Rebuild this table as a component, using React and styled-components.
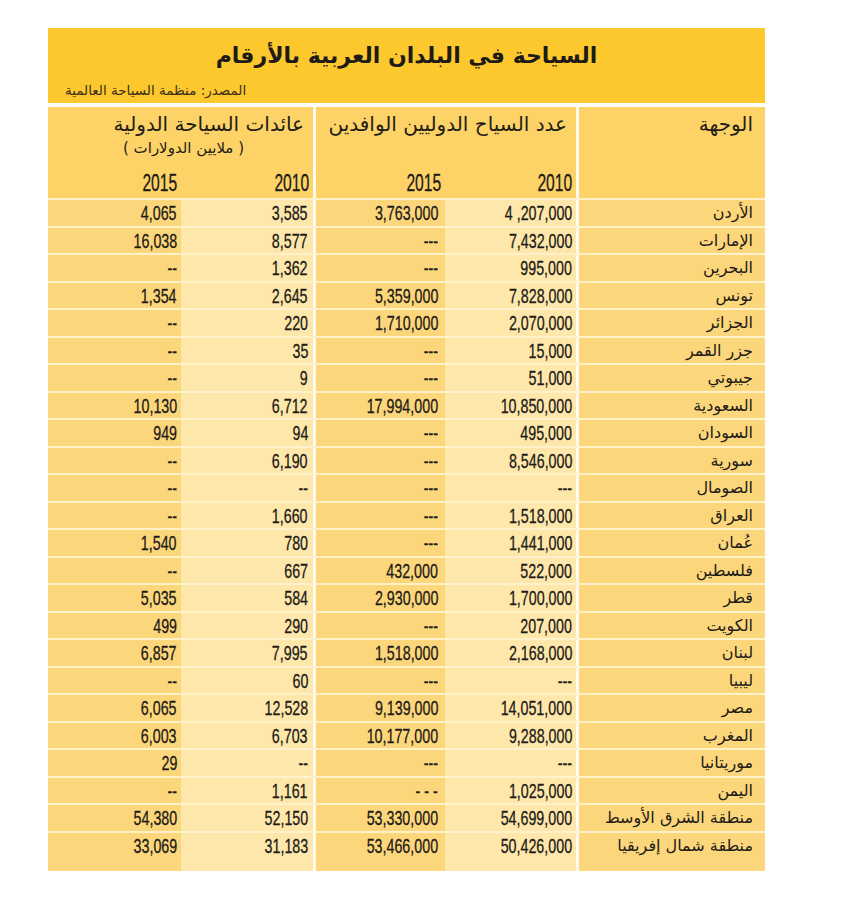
import React from "react";
import styled, { createGlobalStyle } from "styled-components";

const Global = createGlobalStyle`
  html, body { margin: 0; padding: 0; background: #ffffff; }
  * { box-sizing: border-box; }
`;

const Page = styled.div`
  padding: 28px 0 0 48px;
  width: 841px;
  height: 897px;
  background: #ffffff;
`;

const Sheet = styled.div`
  width: 717px;
  display: flex;
  flex-direction: column;
  gap: 4px;
`;

const Banner = styled.header`
  background: #fcc82d;
  height: 75px;
  direction: rtl;
  display: flex;
  flex-direction: column;
  padding: 15px 17px 0 17px;
`;

const Title = styled.h1`
  margin: 0;
  font-family: "DejaVu Sans", sans-serif;
  font-weight: bold;
  font-size: 22px;
  line-height: 26px;
  color: #1d1a17;
  text-align: center;
`;

const Source = styled.div`
  margin-top: 12px;
  font-family: "DejaVu Sans", sans-serif;
  font-size: 13.5px;
  line-height: 18px;
  color: #3a2e1c;
  text-align: left;
`;

const Table = styled.div`
  direction: rtl;
  display: grid;
  grid-template-columns: 189px 131px 132px 132px 133px;
  row-gap: 2px;
  background: #fff1c9;
`;

const HeadCell = styled.div`
  grid-column: span ${(p) => p.$span || 1};
  background: #fdd367;
  height: 91px;
  border-left: ${(p) => (p.$sep ? "3px solid #fffaf0" : "0")};
  display: flex;
  flex-direction: column;
  padding-top: 4px;
`;

const HeadTitle = styled.div`
  font-family: "DejaVu Sans", sans-serif;
  font-size: 20px;
  line-height: 26px;
  color: #231d15;
  white-space: nowrap;
  padding: 0 ${(p) => p.$pad || 9}px;
  text-align: right;
`;

const HeadSub = styled.div`
  font-family: "DejaVu Sans", sans-serif;
  font-size: 15px;
  line-height: 22px;
  height: 22px;
  color: #231d15;
  text-align: center;
  white-space: nowrap;
  padding-left: 6px;
`;

const Years = styled.div`
  margin-top: auto;
  display: grid;
  grid-template-columns: ${(p) => p.$cols};
  height: 28px;
`;

const Year = styled.div`
  font-family: "Liberation Sans", sans-serif;
  font-size: 23px;
  line-height: 26px;
  color: #1d1a17;
  -webkit-text-stroke: 0.3px #1d1a17;
  direction: ltr;
  text-align: right;
  padding-right: 4px;
`;

const Narrow = styled.span`
  display: inline-block;
  transform: scaleX(0.68);
  transform-origin: right center;
`;

const Cell = styled.div`
  background: ${(p) => (p.$tone === "light" ? "#fee7ab" : "#fcd67b")};
  height: ${(p) => (p.$last ? "38.5px" : "25.5px")};
  line-height: 25.5px;
  border-left: ${(p) => (p.$sep ? "3px solid #fffaf0" : "0")};
  color: #1d1a17;
  text-align: right;
  white-space: nowrap;
`;

const NameCell = styled(Cell)`
  font-family: "DejaVu Sans", sans-serif;
  font-size: 16px;
  padding-right: 12px;
  direction: rtl;
`;

const NumCell = styled(Cell)`
  font-family: "Liberation Sans", sans-serif;
  font-size: 21px;
  -webkit-text-stroke: 0.3px #1d1a17;
  direction: ltr;
  padding-right: ${(p) => p.$pr || 5}px;
`;

const rows = [
  ["الأردن", "4 ,207,000", "3,763,000", "3,585", "4,065"],
  ["الإمارات", "7,432,000", "---", "8,577", "16,038"],
  ["البحرين", "995,000", "---", "1,362", "--"],
  ["تونس", "7,828,000", "5,359,000", "2,645", "1,354"],
  ["الجزائر", "2,070,000", "1,710,000", "220", "--"],
  ["جزر القمر", "15,000", "---", "35", "--"],
  ["جيبوتي", "51,000", "---", "9", "--"],
  ["السعودية", "10,850,000", "17,994,000", "6,712", "10,130"],
  ["السودان", "495,000", "---", "94", "949"],
  ["سورية", "8,546,000", "---", "6,190", "--"],
  ["الصومال", "---", "---", "--", "--"],
  ["العراق", "1,518,000", "---", "1,660", "--"],
  ["عُمان", "1,441,000", "---", "780", "1,540"],
  ["فلسطين", "522,000", "432,000", "667", "--"],
  ["قطر", "1,700,000", "2,930,000", "584", "5,035"],
  ["الكويت", "207,000", "---", "290", "499"],
  ["لبنان", "2,168,000", "1,518,000", "7,995", "6,857"],
  ["ليبيا", "---", "---", "60", "--"],
  ["مصر", "14,051,000", "9,139,000", "12,528", "6,065"],
  ["المغرب", "9,288,000", "10,177,000", "6,703", "6,003"],
  ["موريتانيا", "---", "---", "--", "29"],
  ["اليمن", "1,025,000", "- - -", "1,161", "--"],
  ["منطقة الشرق الأوسط", "54,699,000", "53,330,000", "52,150", "54,380"],
  ["منطقة شمال إفريقيا", "50,426,000", "53,466,000", "31,183", "33,069"],
];

export default function App() {
  return (
    <Page>
      <Global />
      <Sheet>
        <Banner>
          <Title>السياحة في البلدان العربية بالأرقام</Title>
          <Source>المصدر: منظمة السياحة العالمية</Source>
        </Banner>
        <Table>
          <HeadCell $sep>
            <HeadTitle $pad={12}>الوجهة</HeadTitle>
          </HeadCell>
          <HeadCell $span={2} $sep>
            <HeadTitle>عدد السياح الدوليين الوافدين</HeadTitle>
            <Years $cols="131px 129px">
              <Year><Narrow>2010</Narrow></Year>
              <Year><Narrow>2015</Narrow></Year>
            </Years>
          </HeadCell>
          <HeadCell $span={2}>
            <HeadTitle>عائدات السياحة الدولية</HeadTitle>
            <HeadSub>( ملايين الدولارات )</HeadSub>
            <Years $cols="132px 133px">
              <Year><Narrow>2010</Narrow></Year>
              <Year><Narrow>2015</Narrow></Year>
            </Years>
          </HeadCell>
          {rows.map((r, i) => {
            const last = i === rows.length - 1;
            return (
              <React.Fragment key={r[0]}>
                <NameCell $tone="dark" $sep $last={last}>{r[0]}</NameCell>
                <NumCell $tone="light" $pr={4} $last={last}><Narrow>{r[1]}</Narrow></NumCell>
                <NumCell $tone="dark" $sep $pr={7} $last={last}><Narrow>{r[2]}</Narrow></NumCell>
                <NumCell $tone="light" $pr={5} $last={last}><Narrow>{r[3]}</Narrow></NumCell>
                <NumCell $tone="dark" $pr={4} $last={last}><Narrow>{r[4]}</Narrow></NumCell>
              </React.Fragment>
            );
          })}
        </Table>
      </Sheet>
    </Page>
  );
}
